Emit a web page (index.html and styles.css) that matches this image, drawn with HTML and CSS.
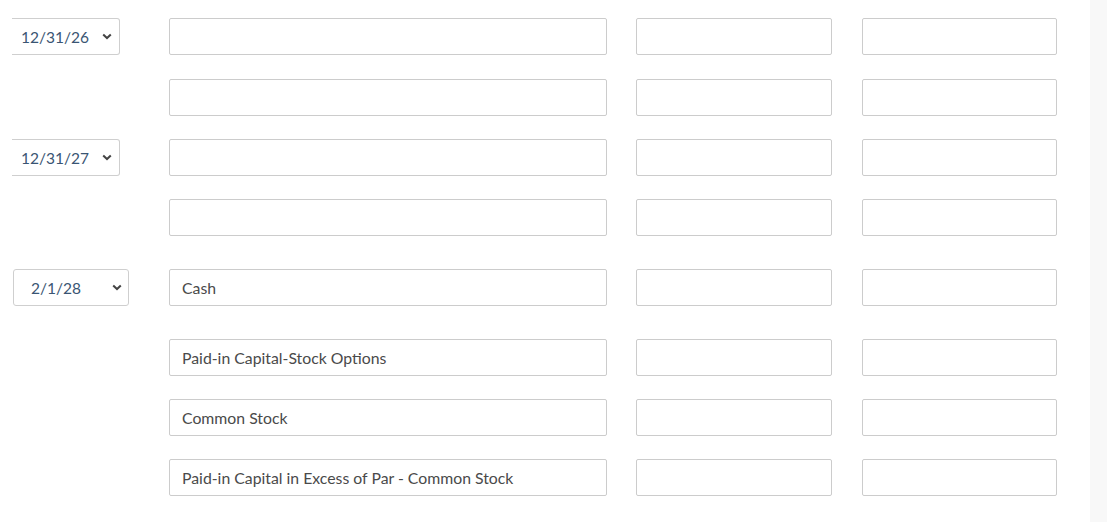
FILE: index.html
```html
<!DOCTYPE html>
<html lang="en">
  <head>
    <meta charset="UTF-8" />
    <meta name="viewport" content="width=device-width, initial-scale=1.0" />
    <title>Journal Entries</title>
    <link rel="stylesheet" href="styles.css">
  </head>
  <body>
    <div class="page">
      <div class="journal">
        <div class="row first">
          <div class="date-cell">
            <div class="date-select clipped">
              <span>12/31/26</span>
              <svg class="chev" width="10" height="7" viewBox="0 0 10 7"><path d="M1.2 1.5l3.8 3.6 3.8-3.6" fill="none" stroke="#444" stroke-width="2"/></svg>
            </div>
          </div>
          <input class="field account" type="text" />
          <input class="field amount" type="text" />
          <input class="field amount last" type="text" />
        </div>
        <div class="row">
          <div class="date-cell"></div>
          <input class="field account" type="text" />
          <input class="field amount" type="text" />
          <input class="field amount last" type="text" />
        </div>

        <div class="row">
          <div class="date-cell">
            <div class="date-select clipped">
              <span>12/31/27</span>
              <svg class="chev" width="10" height="7" viewBox="0 0 10 7"><path d="M1.2 1.5l3.8 3.6 3.8-3.6" fill="none" stroke="#444" stroke-width="2"/></svg>
            </div>
          </div>
          <input class="field account" type="text" />
          <input class="field amount" type="text" />
          <input class="field amount last" type="text" />
        </div>
        <div class="row wide">
          <div class="date-cell"></div>
          <input class="field account" type="text" />
          <input class="field amount" type="text" />
          <input class="field amount last" type="text" />
        </div>

        <div class="row wide">
          <div class="date-cell">
            <div class="date-select short">
              <span>2/1/28</span>
              <svg class="chev" width="10" height="7" viewBox="0 0 10 7"><path d="M1.2 1.5l3.8 3.6 3.8-3.6" fill="none" stroke="#444" stroke-width="2"/></svg>
            </div>
          </div>
          <input class="field account" type="text" value="Cash" />
          <input class="field amount" type="text" />
          <input class="field amount last" type="text" />
        </div>
        <div class="row">
          <div class="date-cell"></div>
          <input class="field account" type="text" value="Paid-in Capital-Stock Options" />
          <input class="field amount" type="text" />
          <input class="field amount last" type="text" />
        </div>
        <div class="row">
          <div class="date-cell"></div>
          <input class="field account" type="text" value="Common Stock" />
          <input class="field amount" type="text" />
          <input class="field amount last" type="text" />
        </div>
        <div class="row">
          <div class="date-cell"></div>
          <input class="field account" type="text" value="Paid-in Capital in Excess of Par - Common Stock" />
          <input class="field amount" type="text" />
          <input class="field amount last" type="text" />
        </div>
      </div>
      <div class="scroll-strip"></div>
    </div>
  </body>
</html>
```

FILE: styles.css
```css
* {
  box-sizing: border-box;
}

body {
  margin: 0;
  font-family: "Lato", "Liberation Sans", sans-serif;
  background: #fff;
  height: 522px;
  overflow: hidden;
}

.page {
  display: flex;
  height: 522px;
}

.journal {
  flex: 1;
  padding-top: 18px;
}

.scroll-strip {
  width: 17px;
  background: #f8f8f8;
}

.row {
  display: flex;
  align-items: center;
  height: 37px;
  margin-bottom: 23px;
}

.row.first {
  margin-bottom: 24px;
}

.row.wide {
  margin-bottom: 33px;
}

.date-cell {
  width: 169px;
  height: 37px;
  flex-shrink: 0;
}

.date-select {
  display: flex;
  align-items: center;
  height: 37px;
  border: 1px solid #cfcfcf;
  border-radius: 3px;
  color: #3a5573;
  font-size: 15.5px;
}

.date-select.clipped {
  width: 108px;
  margin-left: 12px;
  border-left: none;
  border-radius: 0 3px 3px 0;
  padding-left: 9px;
}

.date-select.short {
  width: 116px;
  margin-left: 13px;
  padding-left: 17px;
}

.chev {
  margin-left: auto;
  margin-right: 7px;
}

.date-select.short .chev {
  margin-right: 6px;
}

.field {
  height: 37px;
  border: 1px solid #cccccc;
  border-radius: 2px;
  padding: 0 12px;
  font-family: "Lato", "Liberation Sans", sans-serif;
  font-size: 15.8px;
  color: #4a4a4a;
  background: #fff;
  outline: none;
}

.account {
  width: 438px;
}

.amount {
  width: 196px;
  margin-left: 29px;
}

.amount.last {
  width: 195px;
  margin-left: 30px;
}
```
